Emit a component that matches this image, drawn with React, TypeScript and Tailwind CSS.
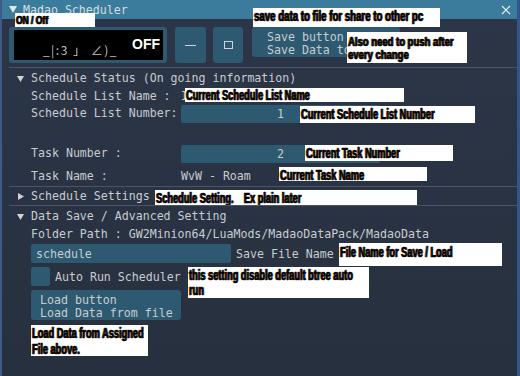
import React from "react";

const Tri = ({ open }: { open?: boolean }) => (
  <svg width="7" height="7" viewBox="0 0 7 7" className="shrink-0">
    {open ? (
      <path d="M0 1h7L3.5 7z" fill="#cfd3d8" />
    ) : (
      <path d="M1 0v7l6-3.5z" fill="#cfd3d8" />
    )}
  </svg>
);

const Sep = () => <div className="ml-[7px] h-px bg-[#4a5567]" />;

const Note = ({
  className,
  textClass,
  lines,
}: {
  className: string;
  textClass: string;
  lines: string[];
}) => (
  <div
    className={
      "absolute bg-white pl-[1px] overflow-hidden font-['Liberation_Sans',sans-serif] font-bold text-black [-webkit-text-stroke:0.6px_black] [text-shadow:-1px_0_0_#c8782a,1px_0_0_#2c64a8] " +
      className
    }
  >
    <div className={"origin-top-left whitespace-pre " + textClass}>
      {lines.map((l, i) => (
        <div key={i}>{l}</div>
      ))}
    </div>
  </div>
);

export default function App() {
  return (
    <div className="relative w-[520px] h-[376px] overflow-hidden">
      <div className="w-[520px] h-[376px] flex flex-col border-l-2 border-l-[#3f5b85] border-r-[3px] border-r-[#34558c] bg-linear-to-b from-[#2c3648] to-[#27303e] font-['DejaVu_Sans_Mono',monospace] text-[11.6px] leading-[14px] text-[#c8ccd1]">
        {/* title bar */}
        <div className="h-[19px] shrink-0 flex items-center bg-[#3b7c9c] pl-[7px] pr-[6px]">
          <svg width="8" height="7" viewBox="0 0 8 7">
            <path d="M0 0h8L4 7z" fill="#dfe4e8" />
          </svg>
          <span className="ml-[6px] text-[#d3dbe2]">Madao Scheduler</span>
          <svg width="10" height="10" viewBox="0 0 10 10" className="ml-auto">
            <path d="M1 1l8 8M9 1l-8 8" stroke="#e6eaee" strokeWidth="1.2" />
          </svg>
        </div>

        {/* top buttons */}
        <div className="mt-[8px] pl-[7px] flex items-start">
          <div className="w-[158px] h-[36px] rounded-[3px] bg-[#2d5a70] pt-[3px] pb-[3px] pl-[5px] pr-[4px]">
            <div className="h-full bg-black flex items-center justify-end pr-[3px]">
              <span className="mt-[10px] mr-[14px] font-['Noto_Sans_CJK_JP',sans-serif] text-[12px] tracking-[1.5px] text-[#c4c4c4] whitespace-pre">
                _|:3 」 ∠)_
              </span>
              <span className="-mt-[3px] font-['Liberation_Sans',sans-serif] font-bold text-[14px] text-white">
                OFF
              </span>
            </div>
          </div>
          <div className="ml-[8px] w-[31px] h-[36px] rounded-[3px] bg-[#2d5a70] flex items-center justify-center">
            <div className="w-[11px] h-px bg-[#d0d4d8]" />
          </div>
          <div className="ml-[7px] w-[30px] h-[36px] rounded-[3px] bg-[#2d5a70] flex items-center justify-center">
            <div className="w-[9px] h-[8px] border border-[#d0d4d8]" />
          </div>
          <div className="ml-[9px] w-[148px] h-[30px] rounded-[3px] bg-[#2d5a70] pt-[4px] pl-[15px] leading-[13px]">
            <div>Save button</div>
            <div>Save Data to file</div>
          </div>
        </div>

        <div className="mt-[4px]">
          <Sep />
        </div>

        {/* schedule status */}
        <div className="h-[20px] flex items-center pl-[15px]">
          <Tri open />
          <span className="ml-[7px]">Schedule Status (On going information)</span>
        </div>
        <div className="h-[15px] flex items-center pl-[29px]">
          <span className="w-[150px]">Schedule List Name :</span>
          <span>I</span>
        </div>
        <div className="h-[22px] flex items-center pl-[29px]">
          <span className="w-[150px] -mt-[3px]">Schedule List Number:</span>
          <div className="w-[199px] h-[18px] rounded-[2px] bg-[#2d5a70] flex items-center justify-center">
            1
          </div>
        </div>
        <div className="h-[18px]" />
        <div className="h-[22px] flex items-center pl-[29px]">
          <span className="w-[150px] -mt-[3px]">Task Number :</span>
          <div className="w-[199px] h-[18px] rounded-[2px] bg-[#2d5a70] flex items-center justify-center">
            2
          </div>
        </div>
        <div className="h-[21px] flex items-center pl-[29px]">
          <span className="w-[150px]">Task Name :</span>
          <span>WvW - Roam</span>
        </div>
        <Sep />

        {/* schedule settings */}
        <div className="h-[18px] flex items-center pl-[15px]">
          <Tri />
          <span className="ml-[7px]">Schedule Settings</span>
        </div>
        <Sep />

        {/* data save */}
        <div className="h-[20px] flex items-center pl-[15px]">
          <Tri open />
          <span className="ml-[7px]">Data Save / Advanced Setting</span>
        </div>
        <div className="h-[16px] flex items-center pl-[29px]">
          Folder Path : GW2Minion64/LuaMods/MadaoDataPack/MadaoData
        </div>
        <div className="mt-[2px] h-[19px] flex items-center pl-[29px]">
          <div className="w-[200px] h-[19px] rounded-[2px] bg-[#2d5a70] flex items-center pl-[5px]">
            schedule
          </div>
          <span className="ml-[5px]">Save File Name</span>
        </div>
        <div className="mt-[4px] h-[19px] flex items-center pl-[29px]">
          <div className="w-[19px] h-[19px] rounded-[2px] bg-[#2d5a70]" />
          <span className="ml-[5px]">Auto Run Scheduler</span>
        </div>
        <div className="mt-[4px] pl-[29px]">
          <div className="w-[150px] h-[30px] rounded-[3px] bg-[#2d5a70] pt-[4px] pl-[9px] leading-[13px]">
            <div>Load button</div>
            <div>Load Data from file</div>
          </div>
        </div>
      </div>

      {/* annotations */}
      <Note
        className="left-[15px] top-[13px] w-[80px] h-[14px] pt-[1px]"
        textClass="text-[11px] leading-[12px] scale-x-[0.77]"
        lines={["ON / Off"]}
      />
      <Note
        className="left-[253px] top-[8px] w-[187px] h-[19px] pt-[2px]"
        textClass="text-[14px] leading-[13px] scale-x-[0.69]"
        lines={["save data to file for share to other pc"]}
      />
      <Note
        className="left-[347px] top-[32px] w-[120px] h-[31px] pt-[3px]"
        textClass="text-[13px] leading-[13px] scale-x-[0.73]"
        lines={["Also need to push after", "every change"]}
      />
      <Note
        className="left-[185px] top-[88px] w-[219px] h-[14px] pt-[1px]"
        textClass="text-[14px] leading-[13px] scale-x-[0.66]"
        lines={["Current Schedule List Name"]}
      />
      <Note
        className="left-[300px] top-[106px] w-[175px] h-[17px] pt-[2px]"
        textClass="text-[14px] leading-[13px] scale-x-[0.66]"
        lines={["Current Schedule List Number"]}
      />
      <Note
        className="left-[305px] top-[145px] w-[148px] h-[16px] pt-[2px]"
        textClass="text-[14px] leading-[13px] scale-x-[0.66]"
        lines={["Current Task Number"]}
      />
      <Note
        className="left-[279px] top-[167px] w-[148px] h-[14px] pt-[2px]"
        textClass="text-[14px] leading-[13px] scale-x-[0.66]"
        lines={["Current Task Name"]}
      />
      <Note
        className="left-[155px] top-[190px] w-[262px] h-[15px] pt-[2px]"
        textClass="text-[14px] leading-[13px] scale-x-[0.66]"
        lines={["Schedule Setting.    Ex plain later"]}
      />
      <Note
        className="left-[339px] top-[243px] w-[163px] h-[23px] pt-[3px]"
        textClass="text-[14px] leading-[13px] scale-x-[0.66]"
        lines={["File Name for Save / Load"]}
      />
      <Note
        className="left-[188px] top-[267px] w-[181px] h-[31px] pt-[1px]"
        textClass="text-[14px] leading-[15px] scale-x-[0.66]"
        lines={["this setting disable default btree auto", "run"]}
      />
      <Note
        className="left-[31px] top-[325px] w-[117px] h-[31px] pt-[0px]"
        textClass="text-[14px] leading-[16px] scale-x-[0.66]"
        lines={["Load Data from Assigned", "File above."]}
      />
    </div>
  );
}
